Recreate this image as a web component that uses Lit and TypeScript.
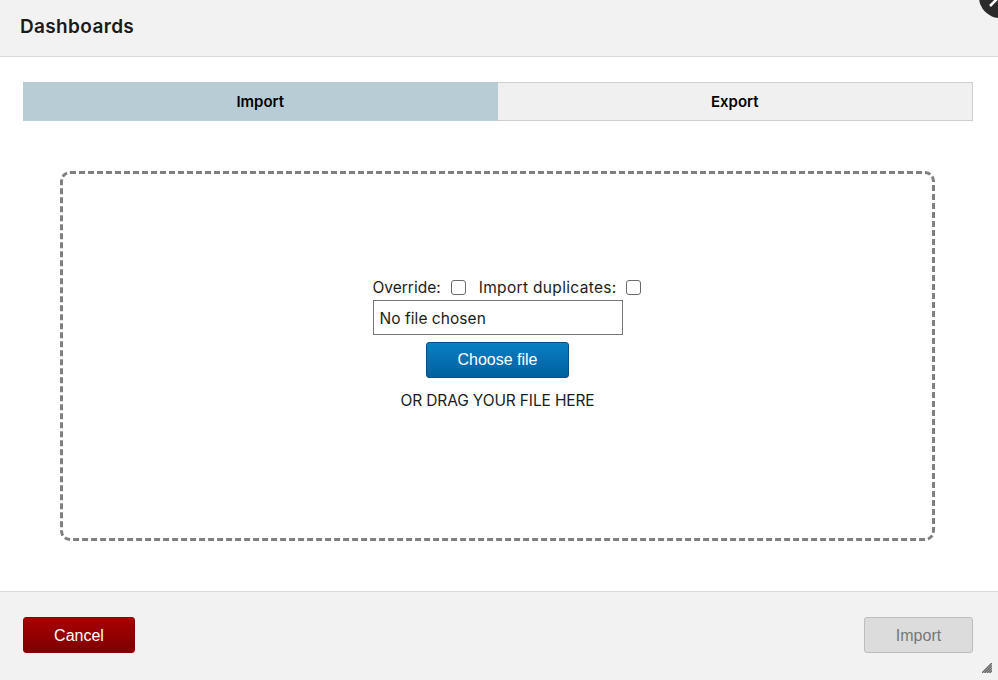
import { LitElement, html, css } from "lit";
import { customElement } from "lit/decorators.js";

@customElement("app-root")
export class AppRoot extends LitElement {
  static styles = css`
    :host { display: block; position: relative; width: 998px; height: 680px; overflow: hidden; background: #fff; font-family: "Inter", "Noto Sans", sans-serif; color: #111; }
    .page { display: flex; flex-direction: column; height: 680px; }
    .header { height: 52px; padding-bottom: 4px; background: #f2f2f2; border-bottom: 1px solid #d9d9d9; display: flex; align-items: center; padding-left: 20px; font-size: 19px; font-weight: 600; letter-spacing: 0.35px; color: #1a1a1a; }
    .body { flex: 1; padding: 25px 25px 0 23px; display: flex; flex-direction: column; }
    .tabs { display: flex; height: 39px; box-sizing: border-box; font-size: 15px; font-weight: 600; color: #000; }
    .tab { flex: 1; display: flex; align-items: center; justify-content: center; box-sizing: border-box; }
    .tab.active { background: #b8ccd5; }
    .tab.idle { background: #f0f0f0; border: 1px solid #cfcfcf; border-left: none; }
    .zone { margin: 50px 38px 0 37px; height: 370px; box-sizing: border-box; border: 3px dashed #808080; border-radius: 10px; padding-bottom: 27px; display: flex; flex-direction: column; align-items: center; justify-content: center; font-size: 15.5px; color: #1c1c1c; }
    .opts { display: flex; align-items: center; height: 24px; width: 250px; white-space: nowrap; margin-bottom: 1px; }
    .check { flex: none; width: 15px; height: 15px; box-sizing: border-box; border: 1px solid #6b6b6b; border-radius: 3px; background: #fff; margin-left: 10px; }
    .second { margin-left: 13px; letter-spacing: 0.33px; }
    .second + .check { margin-left: 9px; }
    .file { width: 250px; height: 35px; box-sizing: border-box; border: 1px solid #767676; display: flex; align-items: center; padding: 2px 0 0 6px; margin-top: -1px; letter-spacing: 0.05px; }
    button { font-family: "Liberation Sans", Arial, sans-serif; font-size: 16px; height: 36px; border-radius: 3px; padding: 0; box-sizing: border-box; }
    .choose { width: 143px; margin-top: 7px; color: #fff; background: linear-gradient(#0a7fc4, #00609f); border: 1px solid #00508a; }
    .drag { margin-top: 14px; line-height: 18px; letter-spacing: -0.14px; }
    .footer { height: 89px; padding: 25px 25px 0 23px; box-sizing: border-box; flex: none; background: #f2f2f2; border-top: 1px solid #d9d9d9; display: flex; align-items: flex-start; justify-content: space-between; position: relative; }
    .cancel { width: 112px; padding-top: 2px; color: #fff; background: linear-gradient(#a80000, #7f0000); border: 1px solid #8a0000; }
    .import { width: 109px; padding-top: 2px; color: #777; background: #dcdcdc; border: 1px solid #bdbdbd; }
    .grip { position: absolute; right: 6px; bottom: 7px; width: 10px; height: 10px; }
    .close { position: absolute; left: 979px; top: -24px; width: 42px; height: 42px; border-radius: 50%; background: #2b2b2b; }
    .closex { position: absolute; left: 968px; top: 0; width: 30px; height: 24px; }
  `;
  render() {
    return html`
      <div class="page">
        <div class="header">Dashboards</div>
        <div class="body">
          <div class="tabs">
            <div class="tab active">Import</div>
            <div class="tab idle">Export</div>
          </div>
          <div class="zone">
            <div class="opts">Override:<span class="check"></span><span class="second">Import duplicates:</span><span class="check"></span></div>
            <div class="file">No file chosen</div>
            <button class="choose">Choose file</button>
            <div class="drag">OR DRAG YOUR FILE HERE</div>
          </div>
        </div>
        <div class="footer">
          <button class="cancel">Cancel</button>
          <button class="import">Import</button>
          <svg class="grip" viewBox="0 0 10 10"><path d="M0 10L10 0M2.5 10L10 2.5M5 10L10 5M7.5 10L10 7.5" stroke="#666" stroke-width="1.5" fill="none"/></svg>
        </div>
      </div>
      <div class="close"></div>
      <svg class="closex" viewBox="0 0 30 24"><path d="M22 6L29 -1" stroke="#fff" stroke-width="2.5" fill="none"/></svg>
    `;
  }
}
